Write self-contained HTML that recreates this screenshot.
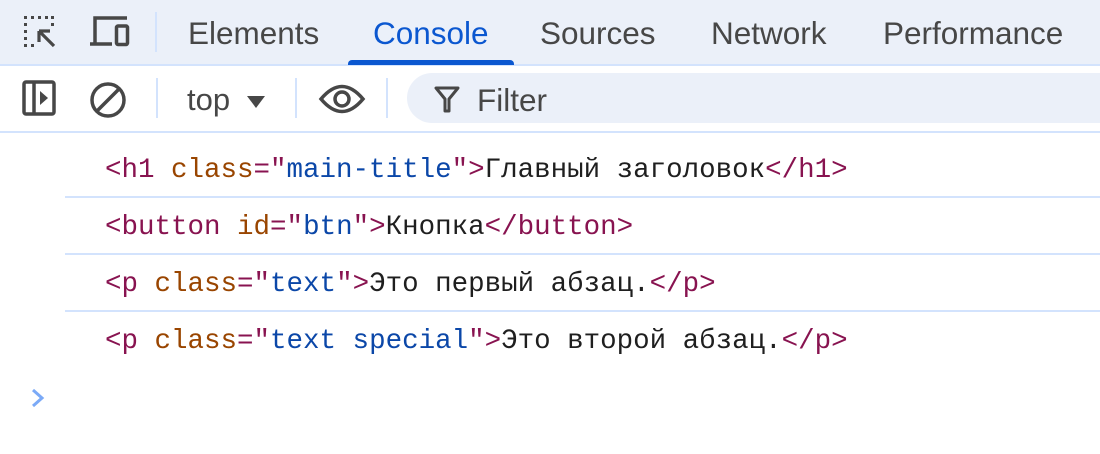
<!DOCTYPE html>
<html><head><meta charset="utf-8"><style>
body{margin:0;width:1100px;height:454px;background:#fff;position:relative;overflow:hidden;font-family:"Liberation Sans",sans-serif}
.top{position:absolute;left:0;top:0;width:1100px;height:64px;background:#ebf0f9;border-bottom:2px solid #d3e3fd}
.tab{position:absolute;top:15px;font-size:31.5px;color:#474747;white-space:nowrap}
.bar2{position:absolute;left:0;top:66px;width:1100px;height:65px;background:#fff;border-bottom:2px solid #d3e3fd}
.vsep{position:absolute;width:2px;background:#d3e3fd}
.mono{font-family:"Liberation Mono","Noto Sans CJK SC",monospace;font-size:27.5px;position:absolute;left:105px;white-space:pre;color:#1f1f1f}
.t{color:#881350}.a{color:#994500}.v{color:#0b47a8}
.sep{position:absolute;left:65px;right:0;height:2px;background:#d3e3fd}
</style></head><body>
<div class="top">
<svg style="position:absolute;left:22px;top:14px" width="36" height="36" viewBox="0 0 36 36"><g fill="#474747"><rect x="2" y="2" width="3" height="3"/><rect x="9" y="2" width="3" height="3"/><rect x="16" y="2" width="3" height="3"/><rect x="23" y="2" width="3" height="3"/><rect x="29" y="2" width="3" height="3"/><rect x="29" y="9" width="3" height="3"/><rect x="2" y="9" width="3" height="3"/><rect x="2" y="16" width="3" height="3"/><rect x="2" y="23" width="3" height="3"/><rect x="2" y="30" width="3" height="3"/><rect x="9" y="30" width="3" height="3"/></g><path d="M17 17 L32 32 M17 17 H28 M17 17 V28" stroke="#474747" stroke-width="3.2" fill="none"/></svg>
<svg style="position:absolute;left:88px;top:15px" width="44" height="34" viewBox="0 0 44 34"><path d="M7 28 V3 H39 M2 29 H24" stroke="#474747" stroke-width="3.5" fill="none"/><rect x="28.5" y="11" width="11" height="18.5" rx="1.5" stroke="#474747" stroke-width="3.5" fill="none"/></svg>
<div class="vsep" style="left:155px;top:12px;height:40px"></div>
<div class="tab" style="left:188px">Elements</div>
<div class="tab" style="left:373px;color:#0b57d0">Console</div>
<div style="position:absolute;left:348px;top:60px;width:166px;height:5px;background:#0b57d0;border-radius:4px 4px 0 0"></div>
<div class="tab" style="left:540px">Sources</div>
<div class="tab" style="left:711px">Network</div>
<div class="tab" style="left:883px">Performance</div>
</div>
<div class="bar2">
<svg style="position:absolute;left:22px;top:14px" width="36" height="36" viewBox="0 0 36 36"><rect x="2" y="2" width="30" height="32" rx="2" stroke="#474747" stroke-width="3.5" fill="none"/><path d="M12 2 V34" stroke="#474747" stroke-width="3.5"/><path d="M18 11 L26 18 L18 25Z" fill="#474747"/></svg>
<svg style="position:absolute;left:88px;top:14px" width="40" height="40" viewBox="0 0 40 40"><circle cx="20" cy="20" r="16" stroke="#474747" stroke-width="3.5" fill="none"/><path d="M9 31 L31 9" stroke="#474747" stroke-width="3.5"/></svg>
<div class="vsep" style="left:156px;top:12px;height:40px"></div>
<div style="position:absolute;left:187px;top:16px;font-size:31px;color:#474747">top</div>
<svg style="position:absolute;left:246px;top:29px" width="20" height="14" viewBox="0 0 20 14"><path d="M1 1 H19 L10 13Z" fill="#474747"/></svg>
<div class="vsep" style="left:295px;top:12px;height:40px"></div>
<svg style="position:absolute;left:318px;top:16px" width="48" height="34" viewBox="0 0 48 34"><path d="M3 17 Q24 -8 45 17 Q24 42 3 17Z" stroke="#474747" stroke-width="3.5" fill="none"/><circle cx="24" cy="17" r="7" stroke="#474747" stroke-width="3.5" fill="none"/></svg>
<div class="vsep" style="left:386px;top:12px;height:40px"></div>
<div style="position:absolute;left:407px;top:7px;width:740px;height:50px;background:#ebf0f9;border-radius:25px"></div>
<svg style="position:absolute;left:433px;top:19px" width="28" height="28" viewBox="0 0 28 28"><path d="M3 3 H25 L16 14 V26 H12 V14Z" stroke="#474747" stroke-width="3" fill="none" stroke-linejoin="round"/></svg>
<div style="position:absolute;left:477px;top:16px;font-size:31.5px;color:#474747">Filter</div>
</div>
<div class="mono" style="top:155px"><span class="t">&lt;h1 </span><span class="a">class</span><span class="t">="</span><span class="v">main-title</span><span class="t">"&gt;</span>Главный заголовок<span class="t">&lt;/h1&gt;</span></div>
<div class="sep" style="top:196px"></div>
<div class="mono" style="top:212px"><span class="t">&lt;button </span><span class="a">id</span><span class="t">="</span><span class="v">btn</span><span class="t">"&gt;</span>Кнопка<span class="t">&lt;/button&gt;</span></div>
<div class="sep" style="top:253px"></div>
<div class="mono" style="top:269px"><span class="t">&lt;p </span><span class="a">class</span><span class="t">="</span><span class="v">text</span><span class="t">"&gt;</span>Это первый абзац.<span class="t">&lt;/p&gt;</span></div>
<div class="sep" style="top:310px"></div>
<div class="mono" style="top:326px"><span class="t">&lt;p </span><span class="a">class</span><span class="t">="</span><span class="v">text special</span><span class="t">"&gt;</span>Это второй абзац.<span class="t">&lt;/p&gt;</span></div>
<svg style="position:absolute;left:30px;top:388px" width="16" height="20" viewBox="0 0 16 20"><path d="M3 2 L12 10 L3 18" stroke="#7baaf7" stroke-width="3" fill="none"/></svg>
</body></html>
